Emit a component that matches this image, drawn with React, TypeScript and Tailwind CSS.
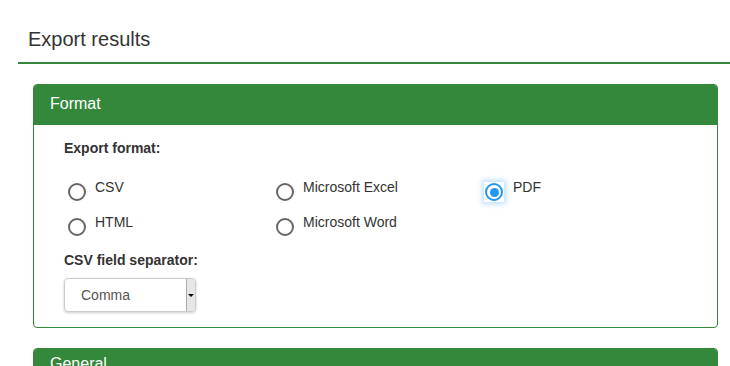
export default function App() {
  const options = [
    { label: "CSV", checked: false },
    { label: "Microsoft Excel", checked: false },
    { label: "PDF", checked: true },
    { label: "HTML", checked: false },
    { label: "Microsoft Word", checked: false },
  ];

  return (
    <div
      className="h-screen overflow-hidden bg-white pl-[18px] text-[#333]"
      style={{ fontFamily: '"Liberation Sans", Arial, sans-serif' }}
    >
      {/* HEADER */}
      <div className="border-b-2 border-[#34883b] pl-[10px] pt-[28px] pb-[12px]">
        <h1 className="text-[20px] leading-[22px] font-normal">Export results</h1>
      </div>

      {/* FORMAT PANEL */}
      <div className="ml-[15px] mr-[12px] mt-[20px] rounded-[4px] border border-[#34883b]">
        <div className="h-[40px] rounded-t-[3px] bg-[#34883b] pl-[16px] text-[16px] leading-[38px] text-white">
          Format
        </div>
        <div className="pl-[30px] pt-[13px] pb-[15px]">
          <p className="text-[14px] leading-[20px] font-bold">Export format:</p>

          <div className="mt-[22px] grid grid-cols-[208px_208px_208px] gap-y-[13px]">
            {options.map((o) => (
              <label key={o.label} className="flex items-start">
                {o.checked ? (
                  <span className="ml-[4px] mt-[2px] flex h-[20px] w-[20px] items-center justify-center shadow-[0_0_5px_2px_rgba(33,150,243,0.3)]">
                    <span className="flex h-[18px] w-[18px] items-center justify-center rounded-full border-2 border-[#2196f3] bg-white">
                      <span className="h-[9px] w-[9px] rounded-full bg-[#2196f3]" />
                    </span>
                  </span>
                ) : (
                  <span className="ml-[4px] mt-[3px] h-[18px] w-[18px] rounded-full border-2 border-[#666]" />
                )}
                <span className="ml-[9px] -mt-[3px] text-[14px] leading-[20px]">{o.label}</span>
              </label>
            ))}
          </div>

          <p className="mt-[14px] text-[14px] leading-[20px] font-bold">CSV field separator:</p>

          <div className="mt-[8px] flex h-[34px] w-[132px] items-center rounded-[4px] border border-[#ccc] bg-white shadow-[0_1px_3px_rgba(0,0,0,0.2)]">
            <span className="flex-1 pl-[16px] text-[14px] text-[#555]">Comma</span>
            <span className="flex h-full w-[9px] items-center justify-center rounded-r-[3px] border-l border-[#aaa] bg-[#e6e6e6]">
              <span className="h-0 w-0 border-x-[3px] border-t-[3px] border-x-transparent border-t-black" />
            </span>
          </div>
        </div>
      </div>

      {/* GENERAL PANEL */}
      <div className="ml-[15px] mr-[12px] mt-[20px] rounded-[4px] border border-[#34883b]">
        <div className="h-[40px] rounded-t-[3px] bg-[#34883b] pl-[16px] pt-[4px] text-[16px] leading-[22px] text-white">
          General
        </div>
      </div>
    </div>
  );
}
